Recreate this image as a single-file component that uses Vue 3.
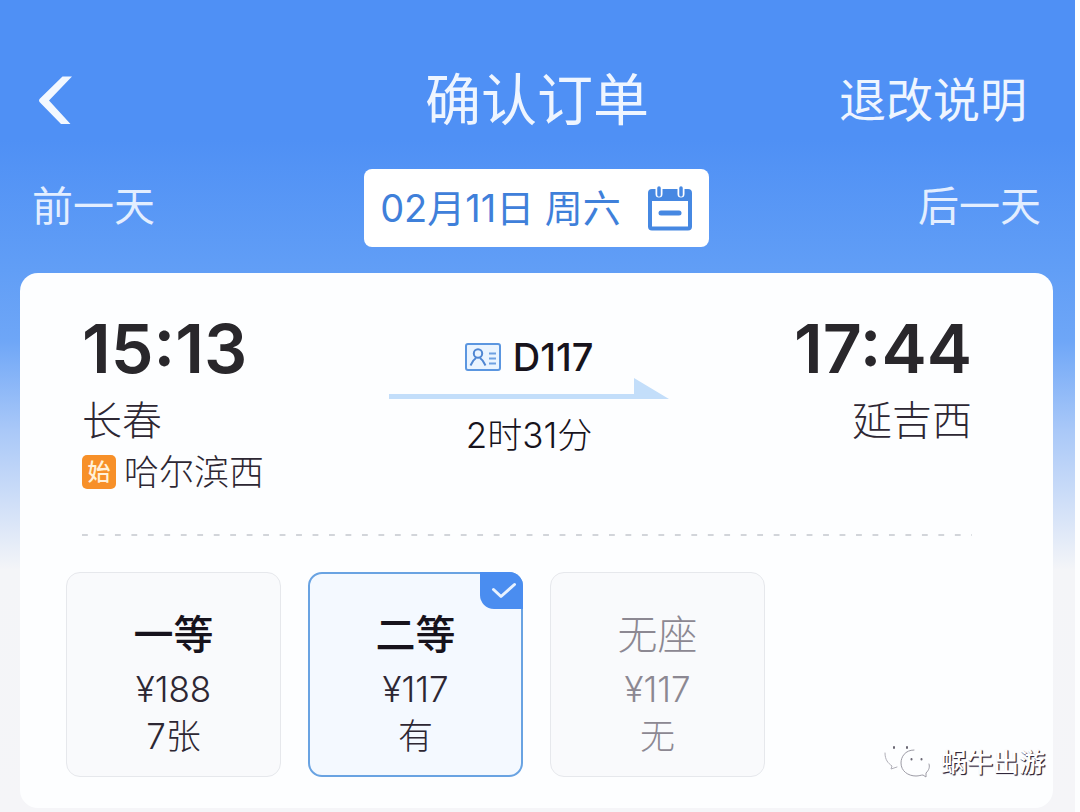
<script setup>
import { ref } from 'vue'

const seats = [
  { name: '一等', price: '¥188', left: '7张', soldOut: false },
  { name: '二等', price: '¥117', left: '有', soldOut: false },
  { name: '无座', price: '¥117', left: '无', soldOut: true },
]
const selected = ref(1)
</script>

<template>
  <div class="page">
    <header class="bar">
      <button class="back" type="button" aria-label="返回">
        <svg width="36" height="52" viewBox="0 0 36 52">
          <path d="M25.500 2.500H35L12 26.500 33.500 50H24L3 28.500Q1 26.500 3 24.500z" fill="#f3f8ff" />
        </svg>
      </button>
      <h1 class="title">确认订单</h1>
      <a class="rules" href="#">退改说明</a>
    </header>

    <nav class="days">
      <button class="day" type="button">前一天</button>
      <button class="date" type="button">
        <span class="date-text">02月11日 周六</span>
        <svg width="46" height="46" viewBox="0 0 46 46">
          <rect x="3" y="6" width="40" height="37.5" rx="2" fill="none" stroke="#4688e2" stroke-width="4" />
          <path d="M2 6h42v10H2z" fill="#4688e2" />
          <path d="M12 1v8M34 1v8" stroke="#fff" stroke-width="7" stroke-linecap="round" />
          <path d="M12 3v7M34 3v7" stroke="#4688e2" stroke-width="3.500" stroke-linecap="round" />
          <path d="M14 28h18" stroke="#4688e2" stroke-width="5" stroke-linecap="round" />
        </svg>
      </button>
      <button class="day" type="button">后一天</button>
    </nav>

    <main class="card">
      <section class="route">
        <div class="stop">
          <div class="time">15:13</div>
          <div class="station">长春</div>
          <div class="origin"><span class="tag">始</span>哈尔滨西</div>
        </div>
        <div class="trip">
          <div class="train">
            <svg width="36" height="28" viewBox="0 0 36 28">
              <rect x="1" y="1" width="34" height="26" rx="2" fill="#eaf4ff" stroke="#5b96e0" stroke-width="2" />
              <circle cx="13" cy="10.5" r="4.2" fill="none" stroke="#4f86d2" stroke-width="2" />
              <path d="M5.500 22.500c1.500-2.500 2.500-5.500 5.500-7.500M15 15c3 2 4 5 5.500 7.500" fill="none" stroke="#4f86d2" stroke-width="2" />
              <path d="M24 10.500h7M24 15.500h7M24 20.500h7" stroke="#6da0e2" stroke-width="2" />
            </svg>
            <span>D117</span>
          </div>
          <svg width="280" height="22" viewBox="0 0 280 22">
            <path d="M0 16h245V0l35 21H0z" fill="#c3defa" />
          </svg>
          <div class="duration">2时31分</div>
        </div>
        <div class="stop end">
          <div class="time">17:44</div>
          <div class="station">延吉西</div>
        </div>
      </section>

      <div class="rule"></div>

      <section class="seats">
        <button
          v-for="(seat, i) in seats"
          :key="seat.name"
          type="button"
          class="seat"
          :class="{ on: selected === i, out: seat.soldOut }"
          :disabled="seat.soldOut"
          :aria-pressed="selected === i"
          @click="selected = i"
        >
          <span class="name">{{ seat.name }}</span>
          <span class="price">{{ seat.price }}</span>
          <span class="left">{{ seat.left }}</span>
          <span v-if="selected === i" class="check">
            <svg width="26" height="18" viewBox="0 0 26 18">
              <path d="M2.500 7.500 10 14.500 23.500 2.500" fill="none" stroke="#e8f2ff" stroke-width="3" stroke-linecap="round" stroke-linejoin="round" />
            </svg>
          </span>
        </button>
      </section>
    </main>

    <div class="mark">
      <svg width="48" height="36" viewBox="0 0 48 36" fill="none" stroke-linecap="round">
        <path d="M2 8c0 7 3 10 7 13l-1 3 6-2" stroke="#b0afb8" stroke-width="1" />
        <path d="M31 5C22 5 18 12 18 18c0 8 7 13 15 13 3 0 5-1 7-1l3 2 0-4c3-3 4-6 3-9" stroke="#9c9ba5" stroke-width="1" />
        <path d="M11 2v1M24 2v1M28.500 14v.5M38.500 14v.5" stroke="#6a6773" stroke-width="2" />
      </svg>
      <span>蜗牛出游</span>
    </div>
  </div>
</template>

<style>
body {
  background: #fdfeff;
}
</style>

<style scoped>
.page {
  position: relative;
  box-sizing: border-box;
  min-height: 100vh;
  padding: 60px 22px 4px 20px;
  border-right: 5px solid #fdfeff;
  background: linear-gradient(#4f90f5 0, #4f90f5 140px, #619ef6 270px, #6ea6f7 340px, #a9c8f8 430px, #d3e1f8 510px, #f4f5f8 570px, #f5f5f8 100%);
  font-family: Inter, "Noto Sans CJK SC", sans-serif;
  color: #2d2733;
}
button {
  margin: 0;
  padding: 0;
  border: 0;
  background: none;
  color: inherit;
  font: inherit;
  cursor: pointer;
}
svg {
  display: block;
  flex: none;
}
.bar {
  display: grid;
  grid-template-columns: 1fr auto 1fr;
  align-items: center;
  height: 80px;
  padding: 0 16px 0 17px;
  color: #eef5ff;
}
.back {
  justify-self: start;
}
.title {
  margin: 0;
  font-size: 56px;
  line-height: 80px;
  font-weight: 400;
}
.rules {
  justify-self: end;
  margin-right: 10px;
  color: inherit;
  font-size: 47px;
  line-height: 80px;
  text-decoration: none;
}
.days {
  display: flex;
  justify-content: space-between;
  align-items: center;
  height: 78px;
  margin: 29px 0 26px;
  padding: 0 12px;
}
.day {
  padding-bottom: 4px;
  color: #e3eeff;
  font-size: 41px;
  line-height: 60px;
}
.date {
  display: flex;
  align-items: center;
  gap: 26px;
  height: 78px;
  padding: 0 16px;
  border-radius: 8px;
  background: #fff;
  color: #3f80da;
  font-size: 38px;
}
.date-text {
  padding-bottom: 6px;
}
.card {
  padding: 40px 46px 31px;
  border-radius: 18px;
  background: #fdfeff;
}
.route {
  display: flex;
  justify-content: space-between;
  padding: 0 35px 0 16px;
}
.time {
  font-size: 68px;
  line-height: 70px;
  font-weight: 600;
  color: #29272b;
}
.station {
  padding-top: 6px;
  font-size: 40px;
  line-height: 64px;
  font-weight: 300;
}
.end {
  text-align: right;
}
.origin {
  display: flex;
  align-items: center;
  gap: 8px;
  font-size: 35px;
  line-height: 38px;
  font-weight: 300;
}
.tag {
  width: 34px;
  height: 34px;
  border-radius: 5px;
  background: #f79029;
  color: #fff1da;
  font-size: 23px;
  line-height: 34px;
  font-weight: 500;
  text-align: center;
}
.trip {
  display: flex;
  flex-direction: column;
  align-items: center;
  padding-top: 23px;
}
.train {
  display: flex;
  align-items: center;
  gap: 12px;
  font-size: 38px;
  line-height: 42px;
  font-weight: 500;
  color: #17131c;
}
.duration {
  margin-top: 11px;
  font-size: 35px;
  line-height: 48px;
  font-weight: 300;
  color: #17131c;
}
.rule {
  height: 2px;
  margin: 43px 35px 36px 16px;
  background: linear-gradient(90deg, #d2d5da 6px, transparent 6px) 0 0 / calc(100% / 54) 2px;
}
.seats {
  display: grid;
  grid-template-columns: repeat(4, 1fr);
  gap: 27px;
}
.seat {
  position: relative;
  display: flex;
  flex-direction: column;
  align-items: center;
  padding: 32px 0 17px;
  border: 1px solid #e6e8ec;
  border-radius: 14px;
  background: #f9fafc;
}
.name {
  font-size: 40px;
  line-height: 60px;
  font-weight: 500;
  color: #17131c;
}
.price {
  font-size: 35px;
  line-height: 48px;
  font-weight: 300;
}
.left {
  font-size: 35px;
  line-height: 46px;
  font-weight: 300;
}
.on {
  padding: 31px 0 16px;
  border: 2px solid #69a3e2;
  background: #f4f9ff;
}
.out {
  color: #8c8892;
  cursor: default;
}
.out .name {
  color: #8c8892;
  font-weight: 300;
}
.check {
  position: absolute;
  top: -2px;
  right: -2px;
  display: flex;
  align-items: center;
  justify-content: center;
  width: 43px;
  height: 37px;
  padding-left: 4px;
  box-sizing: border-box;
  border-radius: 0 14px 0 14px;
  background: #4a8df0;
}
.mark {
  position: absolute;
  right: 30px;
  bottom: 30px;
  display: flex;
  align-items: center;
  gap: 10px;
  color: #fff;
  font-size: 26px;
  line-height: 38px;
  font-weight: 500;
  text-shadow: 1px 1px 1px #2d2438, 1px 1px 0 #55495f;
}
</style>
